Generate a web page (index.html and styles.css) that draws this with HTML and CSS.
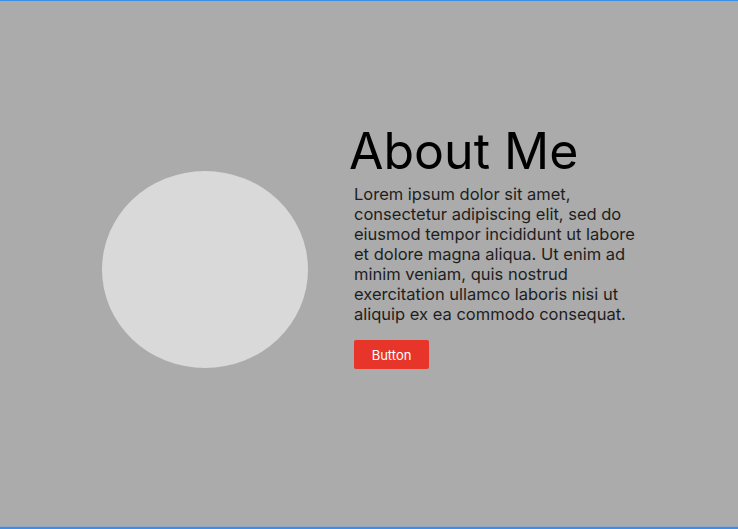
FILE: index.html
```html
<!DOCTYPE html>
<html>
<head>
<meta charset="utf-8">
<link rel="stylesheet" href="styles.css">
</head>
<body>
<div class="frame">
  <section class="about">
    <div class="photo"></div>
    <div class="content">
      <h1 class="title">About Me</h1>
      <p class="text">Lorem ipsum dolor sit amet, consectetur adipiscing elit, sed do eiusmod tempor incididunt ut labore et dolore magna aliqua. Ut enim ad minim veniam, quis nostrud exercitation ullamco laboris nisi ut aliquip ex ea commodo consequat.</p>
      <button class="btn">Button</button>
    </div>
  </section>
  <div class="bottom-line"></div>
</div>
</body>
</html>
```
FILE: styles.css
```css
html, body {
  margin: 0;
  padding: 0;
}
body {
  background: #ababab;
  font-family: Inter, "Noto Sans", sans-serif;
}
.frame {
  box-sizing: border-box;
  height: 529px;
  border-top: 1px solid #3d8ee6;
  border-bottom: 2px solid #3d8ee6;
  display: flex;
  flex-direction: column;
}
.about {
  flex: 1;
  display: flex;
  align-items: flex-start;
  padding-left: 102px;
  padding-top: 121px;
}
.photo {
  width: 206px;
  height: 197px;
  border-radius: 50%;
  background: #d9d9d9;
  margin-top: 49px;
  flex: none;
}
.content {
  margin-left: 41px;
  display: flex;
  flex-direction: column;
  align-items: flex-start;
}
.title {
  margin: 0;
  font-size: 50px;
  font-weight: 400;
  line-height: 58px;
  color: #000;
}
.text {
  margin: 4px 0 0 5px;
  width: 292px;
  font-size: 16.5px;
  line-height: 20px;
  color: #1e1e1e;
}
.btn {
  margin: 16px 0 0 5px;
  width: 75px;
  height: 29px;
  border: none;
  border-radius: 2px;
  background: #e8352a;
  color: #fff;
  font-family: Inter, "Noto Sans", sans-serif;
  font-size: 13px;
  padding: 0;
}
.bottom-line {
  height: 1px;
  background: #8fa9c6;
}
```
